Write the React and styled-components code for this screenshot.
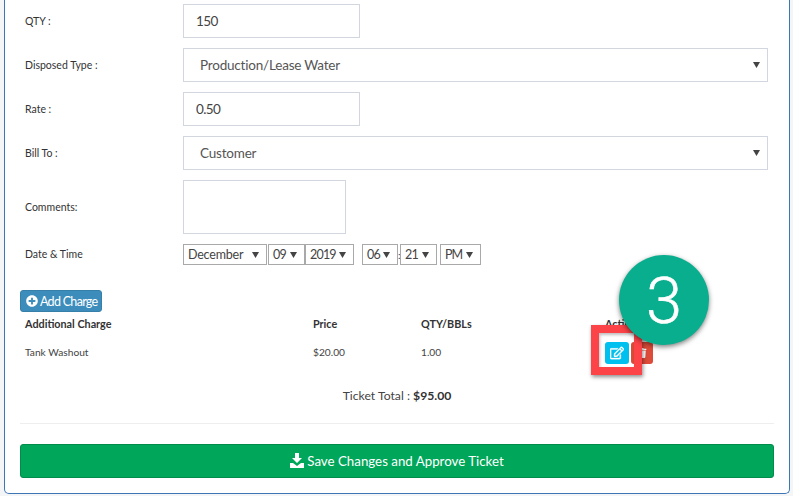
import React from 'react';
import styled, { createGlobalStyle } from 'styled-components';
import { FaPlusCircle, FaRegEdit, FaTrash } from 'react-icons/fa';

const caret = `url("data:image/svg+xml,%3Csvg xmlns='http://www.w3.org/2000/svg' width='7' height='6'%3E%3Cpath d='M0 0h7L3.5 6z' fill='%23444'/%3E%3C/svg%3E")`;

const GlobalStyle = createGlobalStyle`
html, body {
  margin: 0;
  padding: 0;
  height: 496px;
  overflow: hidden;
  background: #f4f5f7;
  font-family: "Lato", "Noto Sans", sans-serif;
  color: #333;
}
`

const Page = styled.div`
position: relative;
width: 793px;
height: 496px;
padding: 0 3px 2px 4px;
box-sizing: border-box;
`

const Panel = styled.div`
height: 494px;
box-sizing: border-box;
background: #fff;
border: 1px solid #3c76b5;
border-top: none;
border-radius: 0 0 5px 5px;
padding: 4px 15px 0 15px;
`

const FormRow = styled.div`
display: grid;
grid-template-columns: 163px 1fr;
align-items: center;
margin-bottom: ${props => props.$gap ?? 10}px;
padding-right: 5px;
`

const Label = styled.label`
font-size: 10.5px;
padding: 0 0 1px 5px;
color: #333;
`

const TextInput = styled.input`
display: block;
width: 177px;
height: 34px;
box-sizing: border-box;
border: 1px solid #d2d6de;
padding: 0 12px;
font: 13.5px "Lato", sans-serif;
letter-spacing: -0.6px;
color: #444;
outline: none;
`

const BigSelect = styled.select`
display: block;
appearance: none;
width: 585px;
height: 34px;
box-sizing: border-box;
border: 1px solid #d2d6de;
border-radius: 0;
background: #fff ${caret} no-repeat right 7px center;
padding: 0 16px;
font: 13.5px "Lato", sans-serif;
letter-spacing: -0.2px;
color: #555;
outline: none;
`

const Comments = styled.textarea`
display: block;
width: 163px;
height: 54px;
box-sizing: border-box;
border: 1px solid #d2d6de;
resize: none;
outline: none;
`

const DateGroup = styled.div`
display: flex;
align-items: center;
`

const SmallSelect = styled.select`
appearance: none;
width: ${props => props.$w}px;
height: 21px;
box-sizing: border-box;
margin-left: ${props => props.$left || 0}px;
border: 1px solid #a9a9a9;
border-radius: 0;
background: #fff ${caret} no-repeat right 7px center;
font: 12.5px "Lato", sans-serif;
letter-spacing: ${props => props.$track || 0}px;
color: #444;
padding: 0 0 0 4px;
outline: none;
`

const Colon = styled.span`
width: 2px;
font-size: 10px;
`

const AddButton = styled.button`
display: flex;
align-items: center;
gap: 2px;
width: 82px;
height: 22px;
margin-top: 25px;
box-sizing: border-box;
padding: 0 0 0 5px;
background: #3c8dbc;
border: 1px solid #367fa9;
border-radius: 3px;
color: #fff;
font: 12.5px "Lato", sans-serif;
letter-spacing: -0.7px;
white-space: nowrap;
`

const ChargeGrid = styled.div`
display: grid;
grid-template-columns: 288px 108px 184px 1fr;
padding-left: 5px;
align-items: center;
`

const HeadRow = styled(ChargeGrid)`
margin-top: 5px;
height: 12px;
font-size: 10.8px;
font-weight: 700;
color: #333;
`

const BodyRow = styled(ChargeGrid)`
margin-top: 13px;
height: 22px;
font-size: 10.2px;
color: #444;
span { margin-top: -2px; }
`

const Actions = styled.div`
display: flex;
gap: 2px;
`

const IconButton = styled.button`
display: flex;
align-items: center;
justify-content: center;
width: ${props => props.$w}px;
height: 22px;
padding: 0;
border: none;
border-radius: 3px;
background: ${props => props.$bg};
color: #fff;
`

const Total = styled.div`
margin-top: 23px;
text-align: center;
font-size: 12.2px;
line-height: 18px;
color: #444;
b { color: #333; }
`

const Rule = styled.hr`
margin: 18px 0 20px;
border: none;
border-top: 1px solid #eee;
`

const SaveButton = styled.button`
display: flex;
align-items: center;
justify-content: center;
gap: 3px;
width: 100%;
height: 34px;
box-sizing: border-box;
background: #00a65a;
border: 1px solid #008d4c;
border-radius: 3px;
color: #fff;
font: 13.3px "Lato", sans-serif;
`

const Highlight = styled.div`
position: absolute;
left: 591px;
top: 325px;
width: 51px;
height: 50px;
box-sizing: border-box;
border: 8px solid #fb4348;
box-shadow: 1px 2px 4px rgba(0, 0, 0, 0.45), inset 1px 2px 3px rgba(0, 0, 0, 0.25);
`

const StepBadge = styled.div`
position: absolute;
left: 619px;
top: 255px;
width: 90px;
height: 90px;
padding-top: 3px;
box-sizing: border-box;
border-radius: 50%;
background: #09ae8e;
box-shadow: 0 2px 5px rgba(0, 0, 0, 0.5);
color: #fff;
display: flex;
align-items: center;
justify-content: center;
font: 300 65px/1 "Roboto", "Liberation Sans", sans-serif;
-webkit-text-stroke: 0.5px #fff;
`

const SaveIcon = () => (
  <svg width="14" height="16" viewBox="0 0 14 16" fill="#fff">
    <path d="M5 0h4v5h3l-5 5-5-5h3z" />
    <path d="M0 10h3l4 3 4-3h3v5H0z" />
  </svg>
);

const Choice = ({ as: Select = SmallSelect, value, ...rest }) => (
  <Select defaultValue={value} {...rest}>
    <option>{value}</option>
  </Select>
);

export default function App() {
  return (
    <Page>
      <GlobalStyle />
      <Panel>
        <FormRow>
          <Label>QTY :</Label>
          <TextInput defaultValue="150" />
        </FormRow>
        <FormRow>
          <Label>Disposed Type :</Label>
          <Choice as={BigSelect} value="Production/Lease Water" />
        </FormRow>
        <FormRow>
          <Label>Rate :</Label>
          <TextInput defaultValue="0.50" />
        </FormRow>
        <FormRow>
          <Label>Bill To :</Label>
          <Choice as={BigSelect} value="Customer" />
        </FormRow>
        <FormRow>
          <Label>Comments:</Label>
          <Comments />
        </FormRow>
        <FormRow $gap={0}>
          <Label>Date &amp; Time</Label>
          <DateGroup>
            <Choice $w={84} $track={-0.2} value="December" />
            <Choice $w={37} $left={1} $track={-0.8} value="09" />
            <Choice $w={49} $track={-0.8} value="2019" />
            <Choice $w={36} $left={8} $track={-0.8} value="06" />
            <Colon>:</Colon>
            <Choice $w={37} $track={-0.8} value="21" />
            <Choice $w={41} $left={3} $track={-1} value="PM" />
          </DateGroup>
        </FormRow>
        <AddButton><FaPlusCircle size={12} />Add Charge</AddButton>
        <HeadRow>
          <span>Additional Charge</span>
          <span>Price</span>
          <span>QTY/BBLs</span>
          <span>Actions</span>
        </HeadRow>
        <BodyRow>
          <span>Tank Washout</span>
          <span>$20.00</span>
          <span>1.00</span>
          <Actions>
            <IconButton $w={24} $bg="#00c0ef"><FaRegEdit size={14} stroke="#fff" strokeWidth={12} /></IconButton>
            <IconButton $w={22} $bg="#dd4b39"><FaTrash size={10} /></IconButton>
          </Actions>
        </BodyRow>
        <Total>Ticket Total : <b>$95.00</b></Total>
        <Rule />
        <SaveButton><SaveIcon />Save Changes and Approve Ticket</SaveButton>
      </Panel>
      <Highlight />
      <StepBadge>3</StepBadge>
    </Page>
  );
}
